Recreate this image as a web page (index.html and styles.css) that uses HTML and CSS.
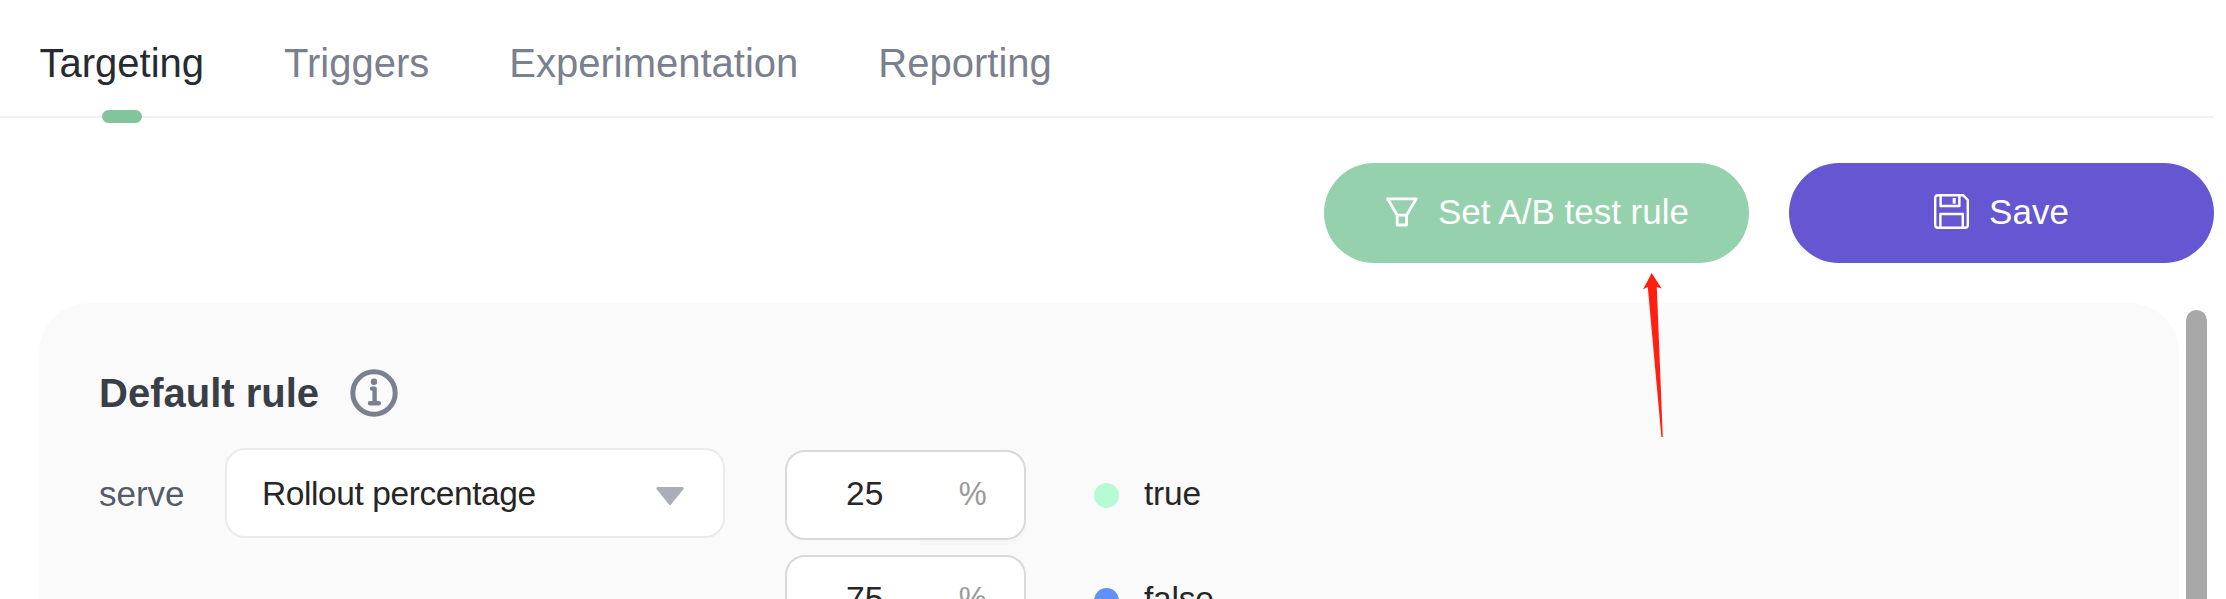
FILE: index.html
```html
<!DOCTYPE html>
<html lang="en">
<head>
<meta charset="utf-8">
<title>Targeting</title>
<link rel="stylesheet" href="styles.css">
</head>
<body>
<div class="page">
  <nav class="tabs">
    <a class="tab active">Targeting</a>
    <a class="tab">Triggers</a>
    <a class="tab">Experimentation</a>
    <a class="tab">Reporting</a>
  </nav>
  <div class="actions">
    <button class="btn btn-green">
      <svg class="icon-funnel" width="32" height="30" viewBox="0 0 32 30" fill="none" stroke="#fff" stroke-width="2.8" stroke-linejoin="round"><path d="M1.6 1.8H30.2L20.6 18.2H11.2ZM11.2 18.2V28H20.6V18.2"/></svg>
      <span class="btn-label">Set A/B test rule</span>
    </button>
    <button class="btn btn-purple">
      <svg class="icon-save" width="35" height="35" viewBox="0 0 35 35" fill="none" stroke="#fff" stroke-width="2.4" stroke-linejoin="round"><path d="M4 1.2H29L33.8 6V31Q33.8 33.8 31 33.8H4Q1.2 33.8 1.2 31V4Q1.2 1.2 4 1.2Z"/><path d="M6.6 1.5V12H25.4V1.5M6.4 33.5V20H28.8V33.5"/><path d="M20.2 4V9.6" stroke-width="3"/></svg>
      <span class="btn-label">Save</span>
    </button>
  </div>
  <div class="content">
    <section class="card">
      <div class="card-head">
        <h2 class="card-title">Default rule</h2>
        <svg class="icon-info" width="48" height="48" viewBox="0 0 48 48" fill="none" stroke="#7a808e"><circle cx="24" cy="24" r="21.2" stroke-width="5"/><circle cx="24" cy="12.8" r="3.2" fill="#7a808e" stroke="none"/><path d="M22 19.6H24.6V34.3M20 34.3H28.8" stroke-width="4.4" stroke-linecap="round" stroke-linejoin="round"/></svg>
      </div>
      <div class="serve-row">
        <span class="serve-label">serve</span>
        <div class="select">
          <span class="select-value">Rollout percentage</span>
          <svg width="28" height="19" viewBox="0 0 28 19"><path d="M1.6 0H26.4Q28.4 .6 27.4 2.3L15 17.6Q14 18.8 13 17.6L.6 2.3Q-.4 .6 1.6 0Z" fill="#a9aeb8"/></svg>
        </div>
        <div class="splits">
          <div class="split">
            <div class="input"><span class="num">25</span><span class="unit">%</span></div>
            <i class="dot dot-true"></i><span class="variation">true</span>
          </div>
          <div class="split">
            <div class="input"><span class="num">75</span><span class="unit">%</span></div>
            <i class="dot dot-false"></i><span class="variation">false</span>
          </div>
        </div>
      </div>
    </section>
    <div class="scrollbar"></div>
  </div>
  <svg class="pointer" width="22" height="166" viewBox="0 0 22 166"><path d="M8.7 0L18.6 15.5L13.8 14L19.8 164L18.4 164L4.8 14L0 16.5Z" fill="#ff2011"/></svg>
</div>
</body>
</html>
```
FILE: styles.css
```css
* { box-sizing: border-box; }
body {
  margin: 0;
  background: #fff;
  font-family: "Liberation Sans", Arial, sans-serif;
  overflow: hidden;
}
.page {
  position: relative;
  width: 2226px;
  height: 599px;
  overflow: hidden;
}
.tabs {
  display: flex;
  gap: 80px;
  width: 2214px;
  height: 118px;
  padding: 7px 0 0 39.5px;
  border-bottom: 2px solid #efeff5;
}
.tab {
  position: relative;
  height: 109px;
  font-size: 40px;
  line-height: 112px;
  color: #7a808e;
}
.tab.active { color: #262b32; }
.tab.active::after {
  content: "";
  position: absolute;
  left: 50%;
  top: 103px;
  width: 40px;
  height: 13px;
  margin-left: -19.5px;
  border-radius: 7px;
  background: #82c49b;
}
.actions {
  display: flex;
  justify-content: flex-end;
  gap: 40px;
  padding: 45px 12px 0 0;
}
.btn {
  display: flex;
  align-items: center;
  justify-content: center;
  width: 425px;
  height: 100px;
  padding: 0;
  border: 0;
  border-radius: 50px;
  color: #fff;
  font: 35px "Liberation Sans", Arial, sans-serif;
}
.btn-green { padding-left: 2px; background: #95d1ac; }
.btn-purple { background: #6557d1; }
.btn-label { margin-bottom: 3px; }
.icon-funnel { margin: 0 20px 2px 0; }
.icon-save { margin: 0 20px 3px 0; }
.content {
  display: flex;
  gap: 7px;
  padding: 40px 0 0 39px;
}
.card {
  position: relative;
  z-index: 0;
  width: 2140px;
  height: 500px;
  padding: 66px 0 0 60px;
  border-radius: 50px;
  background: #fafafa;
}
.card-head {
  display: flex;
  align-items: center;
  gap: 31px;
  height: 48px;
}
.card-title {
  margin: 0;
  font-size: 40px;
  line-height: 48px;
  color: #3a3f47;
}
.serve-row {
  display: flex;
  align-items: flex-start;
  padding-top: 31px;
}
.serve-label {
  width: 126px;
  font-size: 35px;
  line-height: 92px;
  color: #555b69;
}
.select {
  display: flex;
  align-items: center;
  justify-content: space-between;
  width: 500px;
  height: 90px;
  padding: 0 39px 0 35px;
  border: 2px solid #ebebeb;
  border-radius: 20px;
  background: #fff;
}
.select-value {
  font-size: 33.5px;
  letter-spacing: -0.42px;
  line-height: 86px;
  padding-top: 2px;
  color: #262626;
}
.select svg { margin-top: 6px; }
.splits {
  display: flex;
  flex-direction: column;
  gap: 15px;
  padding: 2px 0 0 60px;
}
.split {
  display: flex;
  align-items: center;
  height: 90px;
}
.input {
  position: relative;
  display: flex;
  align-items: center;
  justify-content: space-between;
  width: 241px;
  height: 90px;
  padding: 0 37px 0 59px;
  border: 2px solid #d9d9d9;
  border-radius: 20px;
  background: #fff;
  font-size: 33.5px;
}
.input::after {
  content: "";
  position: absolute;
  z-index: -1;
  right: -2px;
  top: 3px;
  width: 106px;
  height: 90px;
  border-radius: 0 20px 20px 0;
  background: #f6f6f6;
}
.num { color: #262626; padding-bottom: 2px; }
.unit {
  padding-bottom: 3px;
  color: #999;
  font-size: 33px;
  transform: scaleX(0.95);
}
.dot {
  width: 25px;
  height: 25px;
  margin: 1px 25px 0 68px;
  border-radius: 50%;
}
.dot-true { background: #b7fbd4; }
.dot-false { background: #6091fa; }
.variation {
  padding-bottom: 3px;
  font-size: 33.5px;
  letter-spacing: -0.2px;
  color: #262626;
}
.scrollbar {
  width: 21px;
  height: 400px;
  margin-top: 7px;
  border-radius: 11px;
  background: #a8a8a8;
}
.pointer {
  position: absolute;
  left: 1643px;
  top: 273px;
}
```
